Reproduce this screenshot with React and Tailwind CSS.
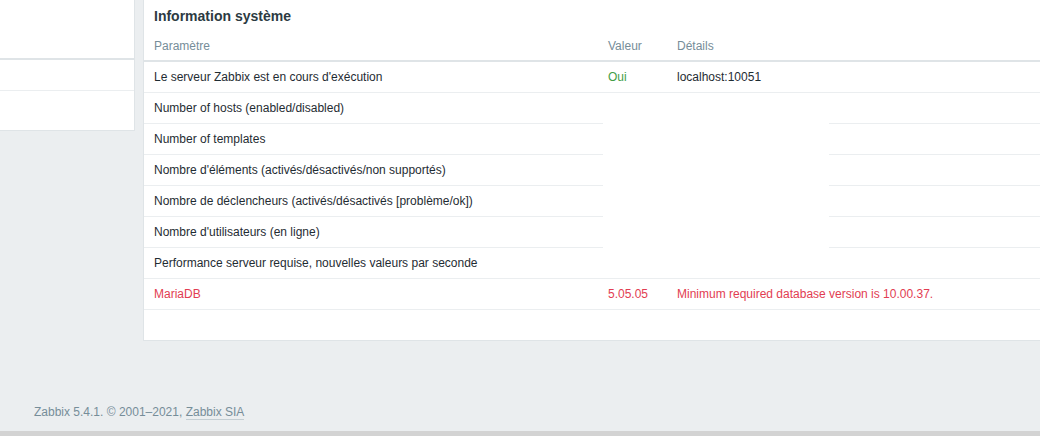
const rows = [
  { p: 'Le serveur Zabbix est en cours d\'exécution', v: 'Oui', d: 'localhost:10051', tone: 'ok', full: true },
  { p: 'Number of hosts (enabled/disabled)' },
  { p: 'Number of templates' },
  { p: 'Nombre d\'éléments (activés/désactivés/non supportés)' },
  { p: 'Nombre de déclencheurs (activés/désactivés [problème/ok])' },
  { p: 'Nombre d\'utilisateurs (en ligne)' },
  { p: 'Performance serveur requise, nouvelles valeurs par seconde', full: true },
  { p: 'MariaDB', v: '5.05.05', d: 'Minimum required database version is 10.00.37.', tone: 'bad', full: true },
];

function Row({ row }) {
  const bad = row.tone === 'bad';
  if (!row.full) {
    return (
      <div className="flex h-[31px]">
        <div className="w-[459px] pl-[10px] flex items-center border-b border-[#ebeef0] text-[#1f2c33]">{row.p}</div>
        <div className="w-[226px]" />
        <div className="flex-1 border-b border-[#ebeef0]" />
      </div>
    );
  }
  return (
    <div className="flex h-[31px] border-b border-[#ebeef0]">
      <div className={`w-[459px] pl-[10px] flex items-center ${bad ? 'text-[#e23d52]' : 'text-[#1f2c33]'}`}>{row.p}</div>
      <div className={`w-[69px] pl-[5px] flex items-center ${bad ? 'text-[#e23d52]' : 'text-[#429e47]'}`}>{row.v}</div>
      <div className={`flex-1 pl-[5px] flex items-center ${bad ? 'text-[#e23d52]' : 'text-[#1f2c33]'}`}>{row.d}</div>
    </div>
  );
}

export default function App() {
  return (
    <div className="w-[1040px] h-[436px] overflow-hidden bg-[#ebeef0] flex flex-col text-[12px] leading-[14px]" style={{ fontFamily: '"Liberation Sans", Arial, sans-serif' }}>
      <div className="flex items-start">
        {/* left widget */}
        <div className="w-[135px] h-[131px] bg-white border-r border-b border-[#dfe4e7] flex flex-col">
          <div className="h-[60px] border-b-2 border-[#dfe4e7]" />
          <div className="h-[31px] border-b border-[#ebeef0]" />
        </div>

        {/* system information widget */}
        <div className="ml-[8px] flex-1 bg-white border-l border-b border-[#dfe4e7] pb-[30px]">
          <div className="h-[32px] pl-[10px] flex items-center text-[14px] font-bold text-[#2c3a42]">Information système</div>
          <div className="flex h-[30px] border-b-2 border-[#dfe4e7] text-[#768d99]">
            <div className="w-[459px] pl-[10px] flex items-center">Paramètre</div>
            <div className="w-[69px] pl-[5px] flex items-center">Valeur</div>
            <div className="flex-1 pl-[5px] flex items-center">Détails</div>
          </div>
          {rows.map((r, i) => (
            <Row key={i} row={r} />
          ))}
        </div>
      </div>

      <div className="flex-1 flex items-end pl-[34px] pb-[12px] text-[#768d99]">
        <span>
          Zabbix 5.4.1. © 2001–2021,{' '}
          <span className="border-b border-[#c4ced3]">Zabbix SIA</span>
        </span>
      </div>
      <div className="h-[5px] bg-[#d3d3d3]" />
    </div>
  );
}
